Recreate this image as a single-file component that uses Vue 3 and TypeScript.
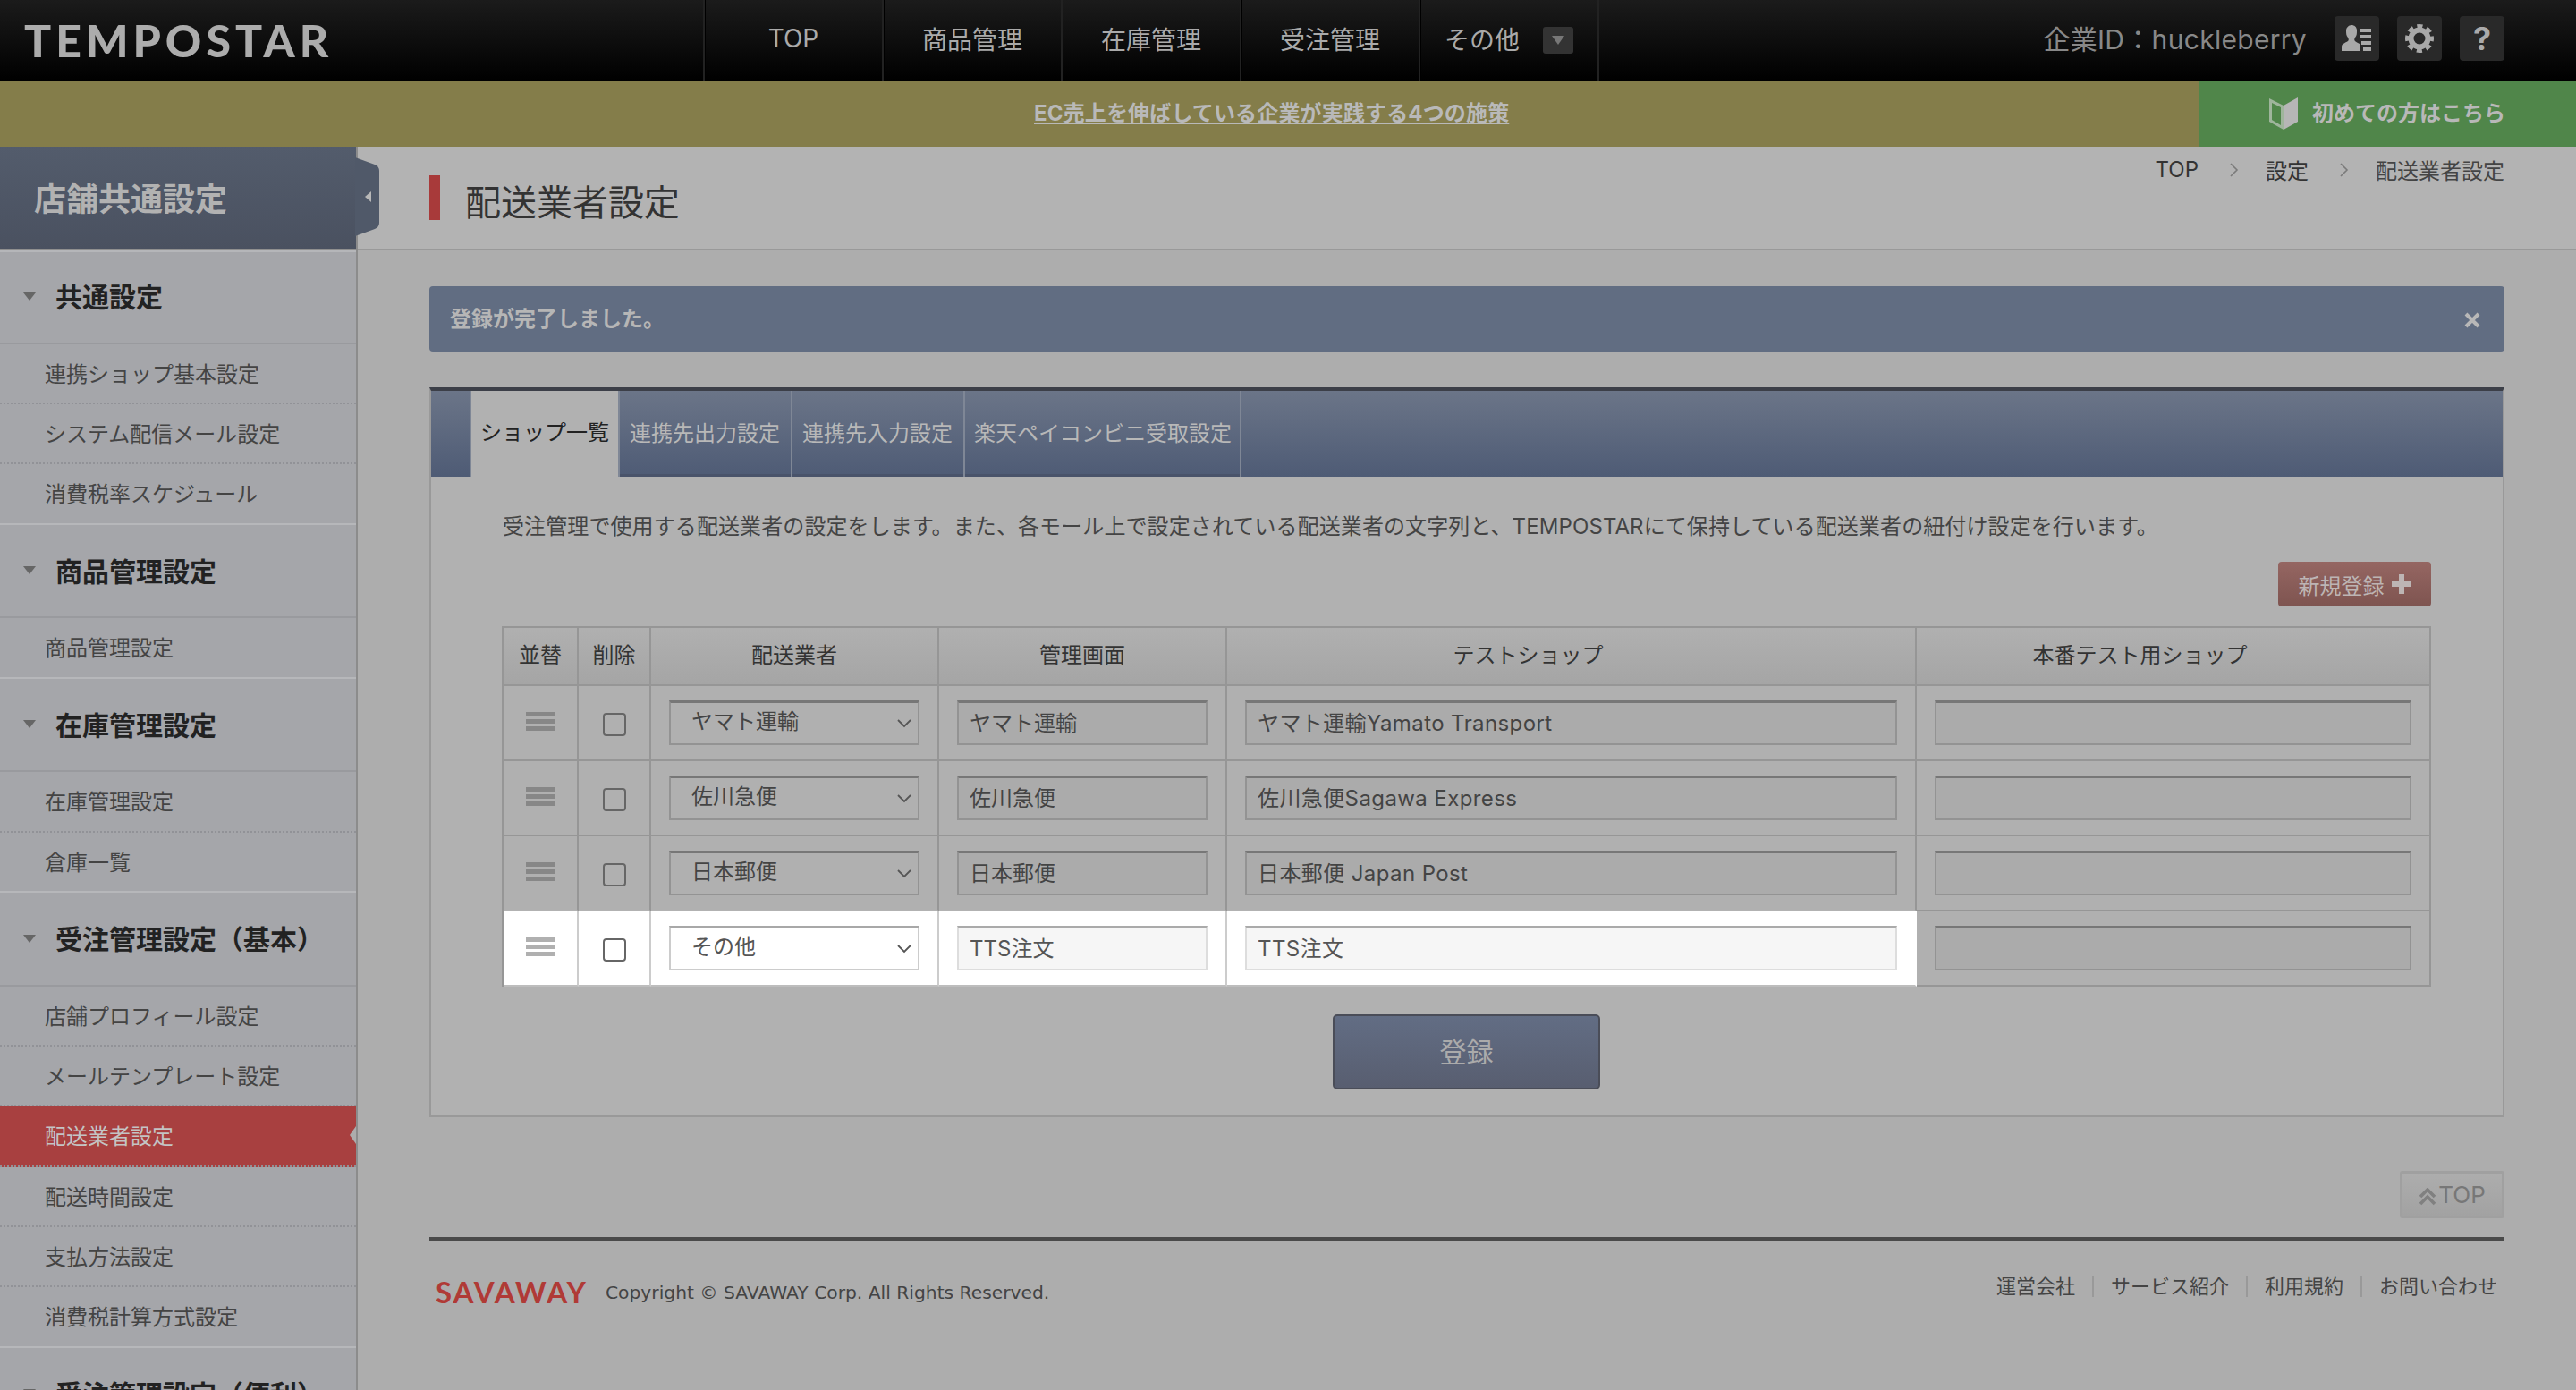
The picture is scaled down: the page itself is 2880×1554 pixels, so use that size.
<script setup lang="ts">
interface NavSection { title: string; items: string[] }
const nav = ['商品管理', '在庫管理', '受注管理']
const sections: NavSection[] = [
  { title: '共通設定', items: ['連携ショップ基本設定', 'システム配信メール設定', '消費税率スケジュール'] },
  { title: '商品管理設定', items: ['商品管理設定'] },
  { title: '在庫管理設定', items: ['在庫管理設定', '倉庫一覧'] },
  { title: '受注管理設定（基本）', items: ['店舗プロフィール設定', 'メールテンプレート設定', '配送業者設定', '配送時間設定', '支払方法設定', '消費税計算方式設定'] },
  { title: '受注管理設定（便利）', items: [] },
]
const tabs = ['ショップ一覧', '連携先出力設定', '連携先入力設定', '楽天ペイコンビニ受取設定']
const heads = ['並替', '削除', '配送業者', '管理画面', 'テストショップ', '本番テスト用ショップ']
const rows = [
  { carrier: 'ヤマト運輸', admin: 'ヤマト運輸', test: 'ヤマト運輸Yamato Transport', lit: false },
  { carrier: '佐川急便', admin: '佐川急便', test: '佐川急便Sagawa Express', lit: false },
  { carrier: '日本郵便', admin: '日本郵便', test: '日本郵便 Japan Post', lit: false },
  { carrier: 'その他', admin: 'TTS注文', test: 'TTS注文', lit: true },
]
const carriers = ['ヤマト運輸', '佐川急便', '日本郵便', 'その他']
const footerLinks = ['運営会社', 'サービス紹介', '利用規約', 'お問い合わせ']
</script>

<template>
  <div class="page">
    <header class="topbar">
      <div class="logo">TEMPOSTAR</div>
      <nav class="topnav">
        <a class="navitem">TOP</a>
        <a v-for="n in nav" :key="n" class="navitem">{{ n }}</a>
        <a class="navitem other">その他<span class="morebtn"><i></i></span></a>
      </nav>
      <div class="account">
        <span class="company">企業ID：huckleberry</span>
        <span class="iconbtn">
          <svg width="34" height="30" viewBox="0 0 34 30"><path d="M0 29v-5c0-3 4-4 7-6 1-1 1-2 0-4-2-2-2-5-2-8 0-3 3-6 6-6s6 2 6 6c0 3 0 6-2 8-1 2-1 3 0 4 1 1 3 2 5 3v8z" fill="#a8a8a8"/><path d="M20 4h13v4H20zM20 11h13v4H20zM22 18h11v4H22zM24 25h9v4h-9z" fill="#a8a8a8"/></svg>
        </span>
        <span class="iconbtn">
          <svg width="32" height="34" viewBox="0 0 32 34"><circle cx="16" cy="17" r="9.5" fill="none" stroke="#a8a8a8" stroke-width="6"/><circle cx="16" cy="17" r="13.5" fill="none" stroke="#a8a8a8" stroke-width="5" stroke-dasharray="6 4.6" stroke-dashoffset="3"/></svg>
        </span>
        <span class="iconbtn q">?</span>
      </div>
    </header>

    <div class="banner">
      <a class="bannerlink">EC売上を伸ばしている企業が実践する4つの施策</a>
      <div class="beginner">
        <svg width="32" height="38" viewBox="0 0 32 38"><path d="M0 2l16 8v27L0 28z" fill="#9fb59c"/><path d="M3 7l10 5v20L3 26z" fill="#50864a"/><path d="M16 10L32 1v27l-16 9z" fill="#b6b6b6"/></svg>
        <span>初めての方はこちら</span>
      </div>
    </div>

    <div class="body">
      <aside class="sidebar">
        <div class="sidetitle">
          店舗共通設定
          <svg class="handle" width="28" height="88" viewBox="0 0 28 88"><path d="M0 0l22 8q5 2 5 7v58q0 5-5 7L0 88z" fill="#505969"/><path d="M18 38v12l-7-6z" fill="#b8b8b8"/></svg>
        </div>
        <section v-for="s in sections" :key="s.title" class="sidesec">
          <h3 class="sidehead"><i class="tri"></i>{{ s.title }}</h3>
          <ul class="sidelist">
            <li v-for="it in s.items" :key="it" class="sideitem" :class="{ active: it === '配送業者設定' }">{{ it }}</li>
          </ul>
        </section>
      </aside>

      <main class="main">
        <div class="titlebar">
          <h1 class="pagetitle">配送業者設定</h1>
          <div class="crumbs">
            <span>TOP</span>
            <svg class="chev" width="10" height="16" viewBox="0 0 10 16"><path d="M1 1l7 7-7 7" fill="none" stroke="#7a7a7a" stroke-width="1.6"/></svg>
            <span>設定</span>
            <svg class="chev" width="10" height="16" viewBox="0 0 10 16"><path d="M1 1l7 7-7 7" fill="none" stroke="#7a7a7a" stroke-width="1.6"/></svg>
            <span class="cur">配送業者設定</span>
          </div>
        </div>

        <div class="content">
          <div class="notice">
            <span>登録が完了しました。</span>
            <svg width="20" height="20" viewBox="0 0 20 20"><path d="M3 3l14 14M17 3L3 17" stroke="#b8b8b8" stroke-width="4"/></svg>
          </div>

          <div class="panel">
            <div class="tabs">
              <span class="tabfill"></span>
              <span v-for="(t, i) in tabs" :key="t" class="tab" :class="{ on: i === 0 }">{{ t }}</span>
            </div>
            <div class="panelbody">
              <p class="desc">受注管理で使用する配送業者の設定をします。また、各モール上で設定されている配送業者の文字列と、TEMPOSTARにて保持している配送業者の紐付け設定を行います。</p>
              <div class="addrow">
                <button class="addbtn">新規登録<svg width="22" height="22" viewBox="0 0 22 22"><path d="M8 0h6v8h8v6h-8v8H8v-8H0V8h8z" fill="#bdb5b4"/></svg></button>
              </div>
              <table class="grid">
                <colgroup>
                  <col style="width:84px" /><col style="width:81px" /><col style="width:322px" /><col style="width:322px" /><col style="width:771px" /><col style="width:575px" />
                </colgroup>
                <thead>
                  <tr><th v-for="h in heads" :key="h">{{ h }}</th></tr>
                </thead>
                <tbody>
                  <tr v-for="(r, i) in rows" :key="r.carrier" :class="{ lit: r.lit, prelit: i === 2 }">
                    <td class="hc"><span class="drag"><i></i><i></i><i></i></span></td>
                    <td class="hc"><input class="check" type="checkbox" /></td>
                    <td>
                      <div class="selwrap">
                        <select class="sel" :value="r.carrier"><option v-for="c in carriers" :key="c">{{ c }}</option></select>
                        <svg class="selarrow" width="16" height="10" viewBox="0 0 16 10"><path d="M1 1l7 7 7-7" fill="none" stroke="#555" stroke-width="1.8"/></svg>
                      </div>
                    </td>
                    <td><input class="txt" type="text" :value="r.admin" /></td>
                    <td><input class="txt wide" type="text" :value="r.test" /></td>
                    <td class="keepdim"><input class="txt dim" type="text" value="" /></td>
                  </tr>
                </tbody>
              </table>
              <div class="submitrow"><button class="submit">登録</button></div>
            </div>
          </div>

          <div class="toprow">
            <a class="totop"><svg width="20" height="20" viewBox="0 0 20 20"><path d="M2 10l8-8 8 8M2 18l8-8 8 8" fill="none" stroke="#808080" stroke-width="3.6"/></svg>TOP</a>
          </div>

          <footer class="footer">
            <div class="fleft">
              <span class="savaway">SAVAWAY</span>
              <span class="copy">Copyright © SAVAWAY Corp. All Rights Reserved.</span>
            </div>
            <div class="flinks">
              <a v-for="l in footerLinks" :key="l">{{ l }}</a>
            </div>
          </footer>
        </div>
      </main>
    </div>
  </div>
</template>

<style>
html, body { margin: 0; overflow: hidden; background: #adadad; }
</style>

<style scoped>
.page {
  width: 2880px; height: 1554px; overflow: hidden; background: #adadad; color: #444;
  font-family: Inter, "Noto Sans CJK JP", sans-serif; font-size: 24px;
}
.topbar {
  height: 90px; display: flex; align-items: center; background: linear-gradient(#1b1b1b, #000);
}
.logo {
  width: 786px; padding-left: 27px; box-sizing: border-box; font-family: Lato, sans-serif; font-weight: 900;
  font-size: 50px; letter-spacing: 5px; color: #acacac; line-height: 90px;
}
.topnav { display: flex; height: 90px; border-left: 2px solid #222; }
.navitem {
  width: 198px; border-right: 2px solid #222; box-shadow: inset 1px 0 0 #000; display: flex; align-items: center; justify-content: center;
  font-size: 28px; color: #aaa; padding-bottom: 4px; box-sizing: content-box; height: 86px;
}
.other { gap: 26px; padding-left: 0; }
.morebtn { width: 34px; height: 30px; background: #333; border-radius: 3px; display: flex; align-items: center; justify-content: center; margin-top: 4px; }
.morebtn i { border-left: 7px solid transparent; border-right: 7px solid transparent; border-top: 10px solid #777; }
.account { flex: 1; display: flex; align-items: center; justify-content: flex-end; padding-right: 80px; }
.company { font-size: 30px; letter-spacing: 0.3px; color: #888; margin-right: 31px; padding-bottom: 6px; }
.iconbtn {
  width: 50px; height: 50px; margin-left: 20px; background: #292929; border-radius: 4px; display: flex; align-items: center; justify-content: center;
  margin-top: -4px;
}
.company + .iconbtn { margin-left: 0; }
.q { font-size: 36px; font-weight: 700; color: #aaa; }
.banner { height: 74px; background: #847d4a; display: flex; align-items: center; position: relative; }
.bannerlink { margin-left: 1156px; font-size: 24px; letter-spacing: 0.15px; font-weight: 700; color: #b9b9b9; text-decoration: underline; padding-bottom: 6px; }
.beginner {
  margin-left: auto; width: 422px; height: 74px; box-sizing: border-box; padding-left: 79px; background: #50864a; display: flex; align-items: center; gap: 16px;
  font-size: 24px; font-weight: 700; color: #b8b8b8;
}
.beginner span { margin-top: -6px; }
.body { display: flex; height: 1390px; }
.sidebar { width: 400px; flex: none; box-sizing: border-box; background: #a5a6aa; border-right: 2px solid #8c8c8c; }
.sidetitle {
  height: 116px; box-sizing: border-box; padding-left: 38px; line-height: 118px; font-size: 36px; font-weight: 700; color: #b2b2b2; position: relative;
  background: linear-gradient(#535c6c, #4a5160); border-bottom: 2px solid #8f8f8f; box-shadow: 0 2px 0 #b5b6b9;
}
.handle { position: absolute; left: 397px; top: 12px; }
.sidesec { margin: 0; }
.sidehead {
  margin: 0; height: 104.67px; box-sizing: border-box; display: flex; align-items: center; font-size: 30px; font-weight: 700; color: #222;
  border-bottom: 2px solid #999a9e; padding-left: 26px; padding-bottom: 2px;
}
.tri { border-left: 7px solid transparent; border-right: 7px solid transparent; border-top: 9px solid #666; margin-right: 22px; margin-top: 2px; }
.sidelist { margin: 0; padding: 0; list-style: none; }
.sideitem {
  height: 67.33px; box-sizing: border-box; padding-left: 50px; padding-bottom: 2px; display: flex; align-items: center; font-size: 24px; color: #444;
  border-bottom: 2px dotted #919297; position: relative;
}
.sideitem:last-child { border-bottom: 2px solid #b6b7ba; }
.active { background: #a84040; color: #c4c4c4; }
.active::after {
  content: ""; position: absolute; right: 0; top: 22px; border-top: 10px solid transparent; border-bottom: 10px solid transparent; border-right: 7px solid #adadad;
}
.main { flex: 1; min-width: 0; }
.titlebar {
  height: 116px; box-sizing: border-box; background: #b3b3b3; border-bottom: 2px solid #999; padding: 12px 80px 0; display: flex; justify-content: space-between; align-items: flex-start;
}
.pagetitle {
  margin: 20px 0 0; height: 50px; border-left: 12px solid #a83a3a; padding-left: 28px; font-size: 40px; font-weight: 400; line-height: 62px; color: #333;
}
.crumbs { display: flex; align-items: center; height: 27px; color: #333; font-size: 24px; }
.crumbs .chev { margin: 0 30px 0 35px; }
.crumbs .cur { color: #444; }
.content { padding: 40px 80px 0; }
.notice {
  height: 73px; box-sizing: border-box; padding: 0 26px 0 23px; background: #616d82; border-radius: 4px; display: flex; align-items: center; justify-content: space-between;
  font-size: 24px; font-weight: 700; color: #b6b6b6;
}
.notice span { margin-top: -4px; }
.notice svg { margin-top: 2px; }
.panel { margin-top: 40px; background: #b1b1b1; border: 2px solid #999; border-top: 4px solid #3c3f48; height: 816px; box-sizing: border-box; }
.tabs { display: flex; height: 96px; background: linear-gradient(#6b7588, #4e5b75); }
.tabfill { width: 45px; box-sizing: border-box; border-right: 2px solid #7f8796; }
.tab {
  display: flex; align-items: center; padding: 0 12px 6px 11px; color: #b8b8b8; font-size: 24px; border-right: 2px solid #7f8796;
  box-shadow: inset 0 -3px 0 #49536a; white-space: nowrap;
}
.tab:last-child { padding: 0 9px 6px 10px; }
.tab.on { background: #b1b1b1; color: #222; box-shadow: none; border-right-color: #7f8796; padding: 0 0 8px; width: 166px; box-sizing: border-box; justify-content: center; }
.panelbody { padding: 0 80px 0 79px; }
.desc { margin: 0 0 0 1px; padding-top: 38px; line-height: 36px; letter-spacing: 0.1px; color: #444; white-space: nowrap; }
.addrow { display: flex; justify-content: flex-end; margin-top: 21px; }
.addbtn {
  width: 171px; height: 50px; border: 0; border-radius: 4px; background: linear-gradient(#956662, #7e5450); color: #bdb5b4; font: inherit; display: flex; align-items: center; justify-content: center; gap: 8px; padding: 0;
}
.grid {
  margin-top: 22px; width: 2155px; table-layout: fixed; border-collapse: separate; border-spacing: 0; border-top: 2px solid #969696; border-left: 2px solid #969696;
}
.grid th, .grid td { border-right: 2px solid #969696; border-bottom: 2px solid #969696; box-sizing: border-box; }
.grid th { height: 65px; font-weight: 400; font-size: 24px; color: #333; background: linear-gradient(#b0b0b0, #a5a5a5); padding: 0 0 6px; }
.grid th:nth-child(5) { padding-right: 96px; }
.grid th:nth-child(6) { padding-right: 74px; }
.grid td { height: 84px; padding: 0 20px; background: #b0b0b0; vertical-align: middle; }
.grid td.hc { padding: 0; text-align: center; }
.prelit td { border-bottom-color: #b2b2b2; }
.prelit td.keepdim { border-bottom-color: #969696; }
.lit td { background: #fff; border-right-color: #ccc; border-bottom-color: #bdbdbd; }
.lit td.keepdim { background: #b0b0b0; border-right-color: #969696; border-bottom-color: #969696; }
.lit td:nth-child(5) { border-right-color: #fff; }
.drag { display: inline-flex; flex-direction: column; gap: 3px; width: 32px; vertical-align: middle; margin-top: -6px; }
.drag i { display: block; height: 5px; background: #878787; }
.lit .drag i { background: #b0b0b0; }
.check {
  appearance: none; -webkit-appearance: none; width: 26px; height: 26px; margin: 2px 0 0; box-sizing: border-box; border: 2px solid #666; border-radius: 4px; background: transparent; vertical-align: middle;
}
.selwrap { position: relative; }
.selarrow { position: absolute; right: 9px; top: 21px; pointer-events: none; }
.sel, .txt {
  display: block; width: 100%; height: 50px; box-sizing: border-box; border: 2px solid #939393; border-top: 3px solid #777; font: inherit; font-size: 24px; color: #444; outline: 0; border-radius: 0;
}
.sel { appearance: none; -webkit-appearance: none; padding: 0 30px 5px 23px; background: #b0b0b0; border-top-width: 3px; }
.txt { padding: 0 12px 5px; background: #ababab; }
.txt.wide { letter-spacing: 0.4px; }
.lit .sel { background: #fff; border-color: #ccc; border-top-color: #a8a8a8; color: #555; }
.lit .txt { background: #f6f6f6; border-color: #ddd; border-top-color: #aaa; color: #555; }
.lit .txt.dim { background: #ababab; border: 2px solid #939393; border-top: 3px solid #777; }
.submitrow { display: flex; justify-content: center; margin-top: 31px; }
.submit {
  width: 299px; height: 84px; box-sizing: border-box; border: 2px solid #4a4d58; border-radius: 5px; background: linear-gradient(#626d84, #585e70); color: #ababab; font: inherit; font-size: 30px; padding: 0 0 4px;
}
.toprow { display: flex; justify-content: flex-end; margin-top: 60px; }
.totop {
  width: 117px; height: 53px; box-sizing: border-box; border: 3px solid #a0a0a0; border-radius: 3px; background: linear-gradient(#adadad, #a2a2a2); color: #777; font-size: 26px; display: flex; align-items: center; justify-content: center; gap: 2px;
}
.totop svg { margin-top: 4px; }
.footer {
  margin-top: 21px; border-top: 4px solid #4a4a4a; display: flex; justify-content: space-between; padding: 0 8px 0 7px; height: 100px;
}
.fleft { display: flex; align-items: center; height: 114px; gap: 20px; }
.savaway { font-family: Lato, sans-serif; font-weight: 700; font-size: 33px; letter-spacing: 2px; color: #b03a36; }
.copy { font-family: "DejaVu Sans", sans-serif; font-size: 20.25px; color: #444; margin-top: 2px; }
.flinks { display: flex; align-items: center; height: 102px; font-size: 22px; color: #444; }
.flinks a { padding: 0 19px; border-left: 2px solid #999; line-height: 24px; }
.flinks a:first-child { border-left: 0; }
.flinks a:last-child { padding-right: 0; }
</style>
